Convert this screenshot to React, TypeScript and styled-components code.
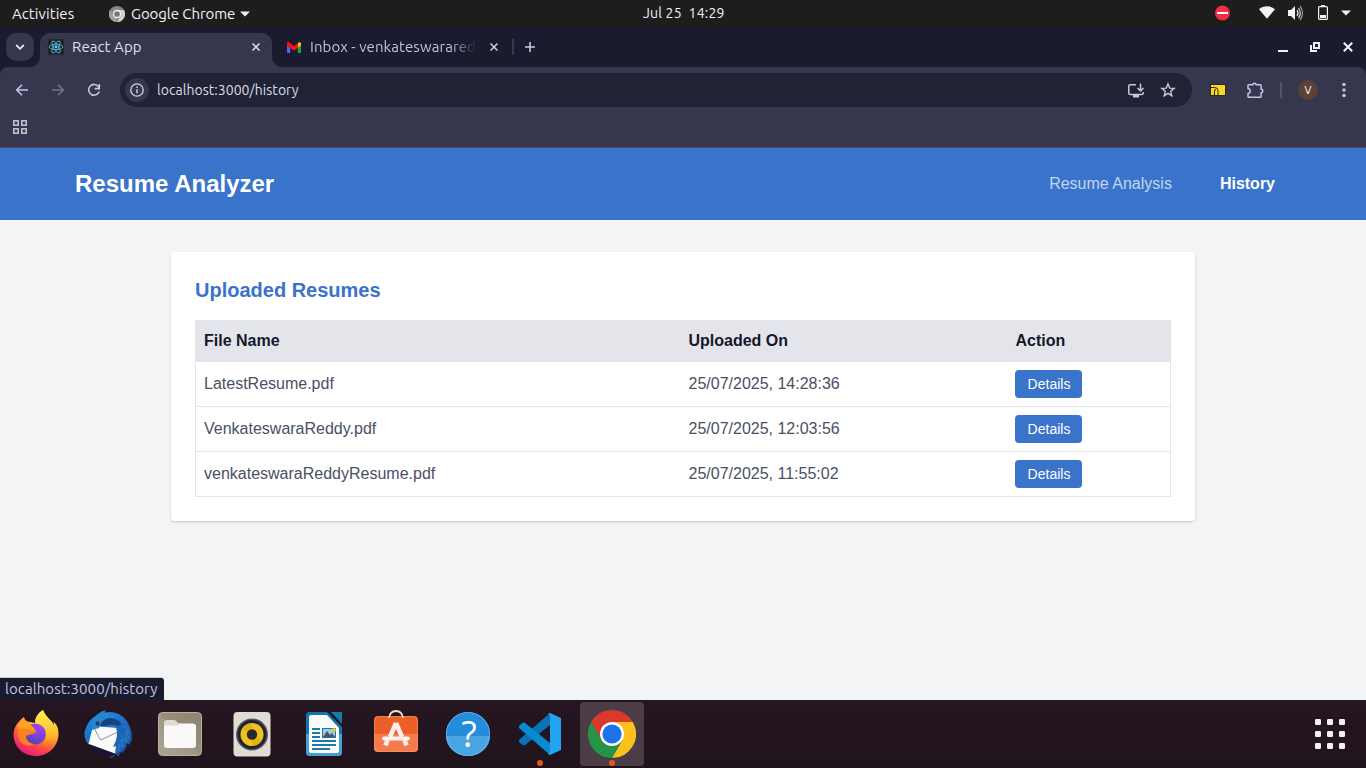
import React from "react";
import styled, { createGlobalStyle } from "styled-components";

const GlobalStyle = createGlobalStyle`
  * { box-sizing: border-box; }
  body { margin: 0; overflow: hidden; }
  svg { display: block; flex: none; }
`;

const ui = `"Ubuntu", "Noto Sans", sans-serif`;

const Desktop = styled.div`
  position: relative;
  width: 1366px;
  height: 768px;
  display: flex;
  flex-direction: column;
  overflow: hidden;
  font-family: ${ui};
`;

const TopBar = styled.header`
  height: 27px;
  background: #1d1d1d;
  display: grid;
  grid-template-columns: 1fr auto 1fr;
  align-items: center;
`;
const TopGroup = styled.div<{ $end?: boolean }>`
  display: flex;
  align-items: center;
  height: 27px;
  justify-content: ${(p) => (p.$end ? "flex-end" : "flex-start")};
  padding: ${(p) => (p.$end ? "0 15px 2px 0" : "0 0 0 12px")};
`;
const Label = styled.span<{ $w: number; $ls?: number; $color?: string; $size?: number }>`
  width: ${(p) => p.$w}px;
  flex: none;
  white-space: pre;
  font-size: ${(p) => p.$size ?? 15}px;
  line-height: 20px;
  letter-spacing: ${(p) => p.$ls ?? 0.08}px;
  color: ${(p) => p.$color ?? "#f2f2f2"};
`;
const Clock = styled(Label)`
  padding-bottom: 1px;
`;
const Gap = styled.span<{ $w: number }>`
  width: ${(p) => p.$w}px;
  flex: none;
`;

const TabStrip = styled.div`
  height: 40px;
  background: #1a1b2f;
  display: flex;
  align-items: flex-start;
  padding: 6px 12px 0 6px;
`;
const TabSearch = styled.div`
  width: 28px;
  height: 28px;
  border-radius: 10px;
  background: #36374e;
  display: grid;
  place-items: center;
  margin-right: 6px;
`;
const Tab = styled.div<{ $active?: boolean }>`
  position: relative;
  height: 34px;
  width: ${(p) => (p.$active ? 232 : 238)}px;
  display: flex;
  align-items: center;
  padding: 0 0 6px ${(p) => (p.$active ? 8 : 15)}px;
  background: ${(p) => (p.$active ? "#36374e" : "transparent")};
  border-radius: 10px 10px 0 0;
  &::before, &::after {
    content: "";
    display: ${(p) => (p.$active ? "block" : "none")};
    position: absolute;
    bottom: 0;
    width: 10px;
    height: 10px;
  }
  &::before { left: -10px; background: radial-gradient(circle at 0 0, transparent 9.6px, #36374e 10.2px); }
  &::after { right: -10px; background: radial-gradient(circle at 100% 0, transparent 9.6px, #36374e 10.2px); }
`;
const FadeLabel = styled(Label)`
  overflow: hidden;
  mask-image: linear-gradient(90deg, #000 140px, transparent 167px);
`;
const StripTools = styled.div`
  height: 28px;
  display: flex;
  align-items: center;
  flex: 1;
`;
const Divider = styled.span<{ $c: string }>`
  width: 2px;
  height: 16px;
  flex: none;
  background: ${(p) => p.$c};
`;

const ToolbarShell = styled.div`
  background: #1a1b2f;
  height: 81px;
`;
const ToolbarPanel = styled.div`
  height: 81px;
  border-radius: 8px 8px 0 0;
  background: #36374e;
  border-bottom: 1px solid #484a58;
`;
const Toolbar = styled.div`
  display: flex;
  align-items: center;
  height: 46px;
  padding-left: 14px;
`;
const AddressBar = styled.div`
  width: 1072px;
  height: 34px;
  border-radius: 17px;
  background: #202236;
  display: flex;
  align-items: center;
  padding-left: 5px;
`;
const InfoChip = styled.span`
  width: 24px;
  height: 24px;
  border-radius: 50%;
  background: #36374e;
  display: grid;
  place-items: center;
  margin-right: 8px;
`;
const Avatar = styled.span`
  width: 20px;
  height: 20px;
  border-radius: 50%;
  background: #5d4037;
  color: #fff;
  font: 11px/20px ${ui};
  text-align: center;
`;
const BookmarkRow = styled.div`
  height: 34px;
  padding: 7px 0 0 13px;
`;

const Page = styled.div`
  height: 552px;
  background: #f3f4f6;
  font-family: "Liberation Sans", Arial, sans-serif;
`;
const Nav = styled.nav`
  height: 72px;
  background: #3973ca;
  display: flex;
  align-items: center;
  padding: 0 91px 0 75px;
`;
const Brand = styled.h1`
  margin: 0;
  flex: 1;
  font-size: 24px;
  line-height: 32px;
  font-weight: 700;
  color: #fff;
`;
const NavLink = styled.a<{ $active?: boolean }>`
  font-size: 16px;
  line-height: 24px;
  margin-left: 48px;
  font-weight: ${(p) => (p.$active ? 700 : 400)};
  color: ${(p) => (p.$active ? "#fff" : "#c3d5f0")};
`;
const Card = styled.section`
  width: 1024px;
  height: 269px;
  margin: 32px auto 0;
  padding: 24px;
  background: #fff;
  border-radius: 4px;
  box-shadow: 0 1px 3px rgba(0, 0, 0, 0.1), 0 1px 2px rgba(0, 0, 0, 0.08);
`;
const CardTitle = styled.h2`
  margin: 0 0 16px;
  font-size: 20px;
  line-height: 28px;
  font-weight: 700;
  color: #3973ca;
`;
const Table = styled.table`
  width: 976px;
  table-layout: fixed;
  border-collapse: collapse;
  border: 1px solid #e4e5eb;
  font-size: 16px;
  line-height: 24px;
`;
const HeadCell = styled.th<{ $w?: number }>`
  width: ${(p) => (p.$w ? `${p.$w}px` : "auto")};
  height: 41px;
  padding: 0 8px;
  text-align: left;
  font-weight: 700;
  color: #15172b;
  background: #e4e5eb;
`;
const Row = styled.tr`
  height: 45px;
  border-top: 1px solid #e4e5eb;
`;
const Cell = styled.td`
  padding: 0 8px;
  color: #4a5064;
`;
const DetailsButton = styled.button`
  display: block;
  width: 67px;
  height: 28px;
  margin-left: -1px;
  padding: 0 0 0 2px;
  border: 0;
  border-radius: 4px;
  background: #3973ca;
  color: #fff;
  font: 14px/20px "Liberation Sans", Arial, sans-serif;
`;

const StatusBubble = styled.div`
  position: absolute;
  left: 0;
  top: 678px;
  width: 164px;
  height: 22px;
  padding: 1px 0 0 5px;
  display: flex;
  border-radius: 0 3px 0 0;
  background: #1a1b2f;
  box-shadow: 0 -1px 0 #c9cacf;
`;
const Dock = styled.footer`
  height: 68px;
  background: linear-gradient(#251622, #20141c);
  display: flex;
  align-items: center;
  gap: 8px;
  padding: 0 4px;
`;
const DockItem = styled.div<{ $active?: boolean; $last?: boolean }>`
  position: relative;
  width: 64px;
  height: 64px;
  border-radius: 4px;
  display: grid;
  place-items: center;
  background: ${(p) => (p.$active ? "#4a3d46" : "transparent")};
  margin-left: ${(p) => (p.$last ? "auto" : "0")};
`;
const RunningDot = styled.span`
  position: absolute;
  left: 29px;
  bottom: 0;
  width: 6px;
  height: 6px;
  border-radius: 50%;
  background: #e95420;
`;

const Caret = () => (
  <svg width="10" height="6" viewBox="0 0 10 6"><path d="M0 .5h10L5 5.5z" fill="#f2f2f2" /></svg>
);
const Close = ({ c }: { c: string }) => (
  <svg width="8" height="8" viewBox="0 0 8 8"><path d="M.5.5l7 7M7.5.5l-7 7" stroke={c} strokeWidth="1.5" /></svg>
);
const ChromeMono = () => (
  <svg width="16" height="16" viewBox="0 0 16 16">
    <circle cx="8" cy="8" r="8" fill="#858585" />
    <path d="M8 4h7a8 8 0 0 1-7 12l3.5-6z" fill="#cfcfcf" />
    <path d="M1 4l3.6 6L8 12l-1 4A8 8 0 0 1 1 4z" fill="#a0a0a0" />
    <circle cx="8" cy="8" r="3.5" fill="#777" stroke="#f3f3f3" strokeWidth="1.3" />
  </svg>
);
const ReactIcon = () => (
  <svg width="16" height="16" viewBox="0 0 16 16">
    <rect width="16" height="16" rx="1.5" fill="#20232a" />
    <g fill="none" stroke="#53c1de" strokeWidth=".8">
      <ellipse cx="8" cy="8" rx="6.8" ry="2.6" />
      <ellipse cx="8" cy="8" rx="6.8" ry="2.6" transform="rotate(60 8 8)" />
      <ellipse cx="8" cy="8" rx="6.8" ry="2.6" transform="rotate(120 8 8)" />
    </g>
    <circle cx="8" cy="8" r="1.4" fill="#61dafb" />
  </svg>
);
const GmailIcon = () => (
  <svg width="14" height="11" viewBox="0 0 14 11">
    <path d="M0 3.5l3.2 2.4V11H1a1 1 0 0 1-1-1z" fill="#5b62f4" />
    <path d="M14 3.5l-3.2 2.4V11H13a1 1 0 0 0 1-1z" fill="#0fa958" />
    <path d="M10.8 1.2l1-.8C12.8-.2 14 .3 14 1.6v2l-3.2 2.4z" fill="#fcc400" />
    <path d="M0 1.6C0 .3 1.3-.3 2.3.4L7 4l3.8-2.8v4.7L7 8.7 3.2 5.9 0 3.6z" fill="#f2160b" />
  </svg>
);
const BackArrow = ({ c, flip }: { c: string; flip?: boolean }) => (
  <svg width="16" height="16" viewBox="0 0 16 16">
    <path transform={flip ? "translate(16 0) scale(-1 1)" : undefined} d="M14 8H3M8 2.7L2.7 8 8 13.3" fill="none" stroke={c} strokeWidth="1.6" />
  </svg>
);
const Reload = () => (
  <svg width="16" height="16" viewBox="0 0 16 16">
    <path d="M13.2 9.5A5.4 5.4 0 1 1 12.4 4.6L13.3 6" fill="none" stroke="#c3c5e2" strokeWidth="1.6" />
    <path d="M13.3 2v4.6H8.7" fill="none" stroke="#c3c5e2" strokeWidth="1.6" />
  </svg>
);
const InfoIcon = () => (
  <svg width="14" height="14" viewBox="0 0 14 14">
    <circle cx="7" cy="7" r="6.2" fill="none" stroke="#d5d6e2" strokeWidth="1.3" />
    <path d="M7 6.2v4M7 3.6v1.5" stroke="#d5d6e2" strokeWidth="1.4" />
  </svg>
);
const InstallIcon = () => (
  <svg width="16" height="15" viewBox="0 0 16 15">
    <path d="M8 1.7H2.2Q.8 1.7.8 3v7.2q0 1.3 1.4 1.3h11.6q1.4 0 1.4-1.3V9" fill="none" stroke="#c8cad0" strokeWidth="1.5" />
    <path d="M5 12h6v2.5H5z" fill="#c8cad0" />
    <path d="M12.5.5v7M9.5 5l3 3 3-3" fill="none" stroke="#c8cad0" strokeWidth="1.5" />
  </svg>
);
const StarIcon = () => (
  <svg width="16" height="16" viewBox="0 0 16 16">
    <path d="M8 1.9l1.7 4.2 4.5.3-3.5 2.9 1.1 4.4L8 11.3l-3.8 2.4 1.1-4.4-3.5-2.9 4.5-.3z" fill="none" stroke="#c8cad0" strokeWidth="1.4" />
  </svg>
);
const YellowExtension = () => (
  <svg width="16" height="12" viewBox="0 0 16 12">
    <rect x=".5" y=".5" width="15" height="11" fill="#f8d928" stroke="#29291f" />
    <path d="M1 3.5h3.5q3.5 0 3.5 3V11M4.500 11V7q0-1.500 1.500-1.500" fill="none" stroke="#29291f" strokeWidth="1" />
  </svg>
);
const PuzzleIcon = () => (
  <svg width="17" height="17" viewBox="0 0 17 17">
    <path d="M1.8 2.8H6c0-2.2 3-2.2 3 0h4.3q.8 0 .8.8v3.7c2.3 0 2.3 3.4 0 3.4v3.7q0 .8-.8.8H1.8q-.8 0-.8-.8v-3c2.9-.4 2.9-4.4 0-4.800v-3q0-.8.8-.8z" fill="none" stroke="#c3c5e2" strokeWidth="1.5" strokeLinejoin="round" />
  </svg>
);
const MenuDots = () => (
  <svg width="4" height="16" viewBox="0 0 4 16" fill="#c3c5e2"><circle cx="2" cy="2.5" r="1.7" /><circle cx="2" cy="8" r="1.7" /><circle cx="2" cy="13.5" r="1.7" /></svg>
);
const AppsGrid = () => (
  <svg width="14" height="14" viewBox="0 0 14 14" fill="none" stroke="#c8c9d2" strokeWidth="1.5">
    {[0.8, 8.8].map((y) => [0.8, 8.8].map((x) => <rect key={`${x}${y}`} x={x} y={y} width="4.4" height="4.4" />))}
  </svg>
);

const DndIcon = () => (
  <svg width="16" height="16" viewBox="0 0 16 16"><circle cx="7.5" cy="8" r="7.5" fill="#f22c42" /><path d="M2 8h11" stroke="#fff" strokeWidth="2" /></svg>
);
const WifiIcon = () => (
  <svg width="16" height="13" viewBox="0 0 16 13"><path d="M0 3.2C4.5-.6 11.5-.6 16 3.2L8 12.8z" fill="#f2f2f2" /></svg>
);
const VolumeIcon = () => (
  <svg width="16" height="16" viewBox="0 0 16 16">
    <path d="M0 5h3l4-4v14l-4-4H0z" fill="#f2f2f2" />
    <path d="M9 5.2q2 2.8 0 5.6" fill="none" stroke="#f2f2f2" strokeWidth="1.2" />
    <path d="M10.5 3q3.6 5 0 10" fill="none" stroke="#ddd" strokeWidth="1.2" />
    <path d="M12 .8q5 7.2 0 14.4" fill="none" stroke="#999" strokeWidth="1.2" />
  </svg>
);
const BatteryIcon = () => (
  <svg width="10" height="15" viewBox="0 0 10 15">
    <path d="M3 0h4v1H3z" fill="#f2f2f2" /><rect x=".6" y="1.6" width="8.8" height="12.8" rx="1" fill="none" stroke="#f2f2f2" strokeWidth="1.2" />
    <path d="M2 10h6v3H2z" fill="#f2f2f2" />
  </svg>
);

const Firefox = () => (
  <svg width="48" height="48" viewBox="0 0 48 48">
    <defs>
      <linearGradient id="ffBody" x1=".8" y1="0" x2=".3" y2="1"><stop offset="0" stopColor="#fff44f" /><stop offset=".4" stopColor="#ffa72c" /><stop offset=".7" stopColor="#ff5040" /><stop offset="1" stopColor="#e31587" /></linearGradient>
      <linearGradient id="ffTail" x1=".5" y1="0" x2=".5" y2="1"><stop offset="0" stopColor="#fff44f" /><stop offset=".6" stopColor="#ffbd2f" /><stop offset="1" stopColor="#ff980e" stopOpacity="0" /></linearGradient>
      <radialGradient id="ffGlobe" cx=".7" cy=".2" r=".8"><stop offset="0" stopColor="#a33fff" /><stop offset="1" stopColor="#5348b8" /></radialGradient>
    </defs>
    <path d="M7.500 11C5 13 2 18 1.500 24c0 13 10 22 22.500 22s22.500-10 22.500-22c0-6-2-10-5-12 .8 2 1 3 .8 4C40 10 34 8 31 0c-5 3-8 8-8 13-3-1-5-1-7.500-1.500-2-1-3-2.500-3.500-4.500-1.500 1-3 2.500-4.500 4z" fill="url(#ffBody)" />
    <path d="M31 0c-5 3-8 8-8 13 9 3 14 12 9 19-2 4-6 6-10 6 12 4 24-5 24-16 0-5-2-8-4.500-10l.8 4C40 10 34 8 31 0z" fill="url(#ffTail)" />
    <circle cx="23.500" cy="24" r="10.300" fill="url(#ffGlobe)" />
    <path d="M6 19c5-3 9 1 17 1 2 0 2 2-2 4-4 1-5 1-7 2 0 4 3 8 8 8-7 4-15 0-16-8z" fill="#ff7e25" />
    <path d="M6 16c1-2 2-3 3-3 4 0 5-1 8 1 3 2 5 3 6 6-6 1-9-3-17-1z" fill="#ffa022" />
  </svg>
);
const Thunderbird = () => (
  <svg width="48" height="48" viewBox="0 0 48 48">
    <defs><linearGradient id="tb" x1=".3" y1="0" x2=".8" y2="1"><stop stopColor="#1e8cdc" /><stop offset=".5" stopColor="#1b69be" /><stop offset="1" stopColor="#1f448f" /></linearGradient></defs>
    <path d="M13 5Q17 1 22 .5L20 2.5Q34 0 42 10q6 8 6 19l-2.500 6-2.500-2q0 6-5 10l-2-1-1 5-3-3-4 4-5-1 4-3L5 35Q-1 29 1 20 4 10 13 5z" fill="url(#tb)" />
    <path d="M14 17Q17 8 26 8q10 0 14 11-8-5-14-4z" fill="#17427f" />
    <path d="M9 16l25 2q1 8-2 14 3 4 0 12L4.500 34z" fill="#fafafc" />
    <path d="M4.500 34L32 44l-6 3Q11 47 4.500 34z" fill="#20132f" />
    <path d="M9 16l7.500 14L34 22" fill="none" stroke="#8f939c" strokeWidth="1" />
    <path d="M32 17q3 9-3 20l3-1-1 8 4-2 2-1 4-5 2-5 3-2q0-9-6-16z" fill="#1c66b6" />
    <path d="M40 15l5 8-4-1 4 6-4 0 3 5M37 25l4 6-4-1 2 7-4-3 0 7" fill="none" stroke="#2f80cc" strokeWidth="1" />
    <path d="M13 5Q17 1 22 .5L20 2.5Q27 4 31 8q-10-1-14 5l-2 5-7 2Q6 10 13 5z" fill="#2587d3" />
    <circle cx="13.500" cy="13.500" r="1.900" fill="#14294f" /><circle cx="13.500" cy="13.500" r=".8" fill="#b0603f" />
  </svg>
);
const Files = () => (
  <svg width="48" height="48" viewBox="0 0 48 48">
    <defs><linearGradient id="files" x1="1" x2="0" y1="0" y2="1"><stop stopColor="#8c8470" /><stop offset=".5" stopColor="#958e7b" /><stop offset=".51" stopColor="#9e9785" /><stop offset="1" stopColor="#aaa493" /></linearGradient></defs>
    <rect x="2.5" y="2.5" width="43" height="43" rx="4" fill="url(#files)" stroke="#b8b19f" />
    <path d="M8 22V13q0-3 3-3h7q2 0 3 2t3 2v8z" fill="#e1dccf" />
    <rect x="8" y="13.5" width="32" height="24.5" rx="3" fill="#faf9f7" />
    <path d="M8 15.5h14l2-2h-3q-1 0-2-1.500H8z" fill="#e1dccf" />
  </svg>
);
const Rhythmbox = () => (
  <svg width="48" height="48" viewBox="0 0 48 48">
    <rect x="5.5" y="2" width="37" height="44.5" rx="4" fill="#e1ddd2" />
    <circle cx="24" cy="24.500" r="16" fill="#555761" /><circle cx="24" cy="24.500" r="14.500" fill="#202233" />
    <circle cx="24" cy="24.500" r="11.500" fill="#f0c21e" /><path d="M24 24.500L14 19a11.500 11.500 0 0 1 10-6zM24 24.500l10 5.500a11.500 11.500 0 0 1-10 6z" fill="#d9a814" opacity=".6" />
    <circle cx="24" cy="24.500" r="5.200" fill="#292a2b" />
  </svg>
);
const Writer = () => (
  <svg width="48" height="48" viewBox="0 0 48 48">
    <path d="M9 2h33v40q0 4-4 4H10q-4 0-4-4V6q0-4 3-4z" fill="#1277ad" /><path d="M6 24h36v18q0 4-4 4H10q-4 0-4-4z" fill="#47a0d0" />
    <path d="M11 5h16l12 13v23q0 2-2 2H11q-2 0-2-2V7q0-2 2-2z" fill="#fbfbfb" />
    <path d="M27 2h4l11 12v3z" fill="#20151f" /><path d="M32 2h10v10z" fill="#167cae" />
    <path d="M12 19h8M12 23h8M12 27h8M12 31h24M12 35h24M12 39h18" stroke="#1b7aac" strokeWidth="2" />
    <rect x="22.5" y="18.5" width="13" height="9" fill="#9bcce8" stroke="#1777ab" /><path d="M23 27l4-6 3 4 2-2 3 4z" fill="#505457" /><circle cx="34" cy="20" r="2" fill="#fac11c" />
  </svg>
);
const Software = () => (
  <svg width="48" height="48" viewBox="0 0 48 48">
    <rect x="2" y="6" width="44" height="36" rx="4" fill="#ed5f28" /><path d="M2 24h44v14q0 4-4 4H6q-4 0-4-4z" fill="#f47b4e" />
    <rect x="2.5" y="6.5" width="43" height="35" rx="4" fill="none" stroke="#ffa078" opacity=".45" />
    <path d="M17 8q1-7 7-7t7 7" fill="none" stroke="#f8dfb9" strokeWidth="1.8" />
    <path d="M24 13L18 27M24 13l6 14M15.500 30l-2 5.500M32.500 30l2 5.500" fill="none" stroke="#f7eee9" strokeWidth="4.6" />
    <path d="M12 28.500h24" stroke="#faf5f2" strokeWidth="4" strokeLinecap="round" />
  </svg>
);
const HelpText = styled.text`
  font-family: "Open Sans", sans-serif;
  font-size: 36px;
  text-anchor: middle;
`;
const Help = () => (
  <svg width="48" height="56" viewBox="0 -4 48 56">
    <circle cx="24" cy="24" r="22" fill="#258bdb" /><path d="M2 26a22 20 0 0 0 44 0z" fill="#48a5e2" /><circle cx="24" cy="24" r="21.6" fill="none" stroke="#6bb8e8" strokeWidth=".8" />
    <HelpText x="25" y="37" fill="#fff">?</HelpText>
  </svg>
);
const VsCode = () => (
  <svg width="44" height="44" viewBox="0 0 44 44">
    <path d="M32 1v12L7 33q-2 1-3-.5l-2.500-2q-1.500-1.500 0-3z" fill="#0873b7" />
    <path d="M32 43V31L7 11q-2-1-3 .5l-2.500 2q-1.500 1.500 0 3z" fill="#078ad2" />
    <path d="M32 1l11 5v32l-11 5q-1 0-2-1 2 0 2-2V4q0-2-2-2 1-1 2-1z" fill="#24a3f2" />
  </svg>
);
const Chrome = () => (
  <svg width="48" height="48" viewBox="0 0 48 48">
    <path d="M3.215 12A24 24 0 0 1 44.785 12H24L13.600 30z" fill="#dc392d" />
    <path d="M44.785 12A24 24 0 0 1 24 48L34.400 30 24 12z" fill="#fcc21b" />
    <path d="M24 48A24 24 0 0 1 3.215 12L13.600 30 34.400 30z" fill="#269447" />
    <circle cx="24" cy="24" r="12" fill="#fff" /><circle cx="24" cy="24" r="9.6" fill="#1a73e8" />
  </svg>
);
const ShowApps = () => (
  <svg width="30" height="30" viewBox="0 0 30 30" fill="#f1eff0">
    {[0, 12, 24].map((y) => [0, 12, 24].map((x) => <rect key={`${x}-${y}`} x={x} y={y} width="6" height="6" rx="1.3" />))}
  </svg>
);

const resumes = [
  ["LatestResume.pdf", "25/07/2025, 14:28:36"],
  ["VenkateswaraReddy.pdf", "25/07/2025, 12:03:56"],
  ["venkateswaraReddyResume.pdf", "25/07/2025, 11:55:02"],
];

export default function App() {
  return (
    <Desktop>
      <GlobalStyle />
      <TopBar>
        <TopGroup>
          <Label $w={97}>Activities</Label>
          <ChromeMono />
          <Gap $w={6} />
          <Label $w={109} $ls={-0.07}>Google Chrome</Label>
          <Caret />
        </TopGroup>
        <Clock $w={80} $size={14} $ls={0.2}>{"Jul 25  14:29"}</Clock>
        <TopGroup $end>
          <DndIcon />
          <Gap $w={28} />
          <WifiIcon />
          <Gap $w={13} />
          <VolumeIcon />
          <Gap $w={14} />
          <BatteryIcon />
          <Gap $w={13} />
          <Caret />
        </TopGroup>
      </TopBar>
      <TabStrip>
        <TabSearch>
          <svg width="10" height="6" viewBox="0 0 10 6"><path d="M1.2 1L5 4.8 8.8 1" fill="none" stroke="#e4e4ee" strokeWidth="1.8" /></svg>
        </TabSearch>
        <Tab $active>
          <ReactIcon />
          <Gap $w={8} />
          <Label $w={180} $color="#dfe0ea">React App</Label>
          <Close c="#e0e1ea" />
        </Tab>
        <Tab>
          <GmailIcon />
          <Gap $w={9} />
          <FadeLabel $w={167} $color="#c0c2dd">Inbox - venkateswarared</FadeLabel>
          <Gap $w={13} />
          <Close c="#d0d1e0" />
        </Tab>
        <StripTools>
          <Gap $w={2} />
          <Divider $c="#36374e" />
          <Gap $w={11} />
          <svg width="10" height="10" viewBox="0 0 10 10"><path d="M5 0v10M0 5h10" stroke="#c8c9e0" strokeWidth="1.6" /></svg>
          <Gap $w={743} />
          <svg width="10" height="10" viewBox="0 0 10 10"><path d="M0 9h10" stroke="#f0f0f4" strokeWidth="2" /></svg>
          <Gap $w={22} />
          <svg width="10" height="10" viewBox="0 0 10 10"><path d="M4 1h5v5H4zM1 3v6h6" fill="none" stroke="#f0f0f4" strokeWidth="2" /></svg>
          <Gap $w={23} />
          <svg width="10" height="10" viewBox="0 0 10 10"><path d="M.8.8l8.4 8.4M9.2.8L.8 9.2" stroke="#f0f0f4" strokeWidth="2" /></svg>
        </StripTools>
      </TabStrip>
      <ToolbarShell>
        <ToolbarPanel>
          <Toolbar>
            <BackArrow c="#c3c5e2" />
            <Gap $w={20} />
            <BackArrow c="#727388" flip />
            <Gap $w={20} />
            <Reload />
            <Gap $w={18} />
            <AddressBar>
              <InfoChip><InfoIcon /></InfoChip>
              <Label $w={971} $size={14} $ls={0.04} $color="#dcdde5">localhost:3000/history</Label>
              <InstallIcon />
              <Gap $w={16} />
              <StarIcon />
            </AddressBar>
            <Gap $w={18} />
            <YellowExtension />
            <Gap $w={21} />
            <PuzzleIcon />
            <Gap $w={16} />
            <Divider $c="#52546a" />
            <Gap $w={16} />
            <Avatar>V</Avatar>
            <Gap $w={24} />
            <MenuDots />
          </Toolbar>
          <BookmarkRow><AppsGrid /></BookmarkRow>
        </ToolbarPanel>
      </ToolbarShell>
      <Page>
        <Nav>
          <Brand>Resume Analyzer</Brand>
          <NavLink>Resume Analysis</NavLink>
          <NavLink $active>History</NavLink>
        </Nav>
        <Card>
          <CardTitle>Uploaded Resumes</CardTitle>
          <Table>
            <thead>
              <tr>
                <HeadCell $w={485}>File Name</HeadCell>
                <HeadCell $w={327}>Uploaded On</HeadCell>
                <HeadCell>Action</HeadCell>
              </tr>
            </thead>
            <tbody>
              {resumes.map(([name, date]) => (
                <Row key={name}>
                  <Cell>{name}</Cell>
                  <Cell>{date}</Cell>
                  <Cell><DetailsButton>Details</DetailsButton></Cell>
                </Row>
              ))}
            </tbody>
          </Table>
        </Card>
      </Page>
      <Dock>
        <DockItem><Firefox /></DockItem>
        <DockItem><Thunderbird /></DockItem>
        <DockItem><Files /></DockItem>
        <DockItem><Rhythmbox /></DockItem>
        <DockItem><Writer /></DockItem>
        <DockItem><Software /></DockItem>
        <DockItem><Help /></DockItem>
        <DockItem><VsCode /><RunningDot /></DockItem>
        <DockItem $active><Chrome /><RunningDot /></DockItem>
        <DockItem $last><ShowApps /></DockItem>
      </Dock>
      <StatusBubble><Label $w={155} $color="#c3c5e0">localhost:3000/history</Label></StatusBubble>
    </Desktop>
  );
}
